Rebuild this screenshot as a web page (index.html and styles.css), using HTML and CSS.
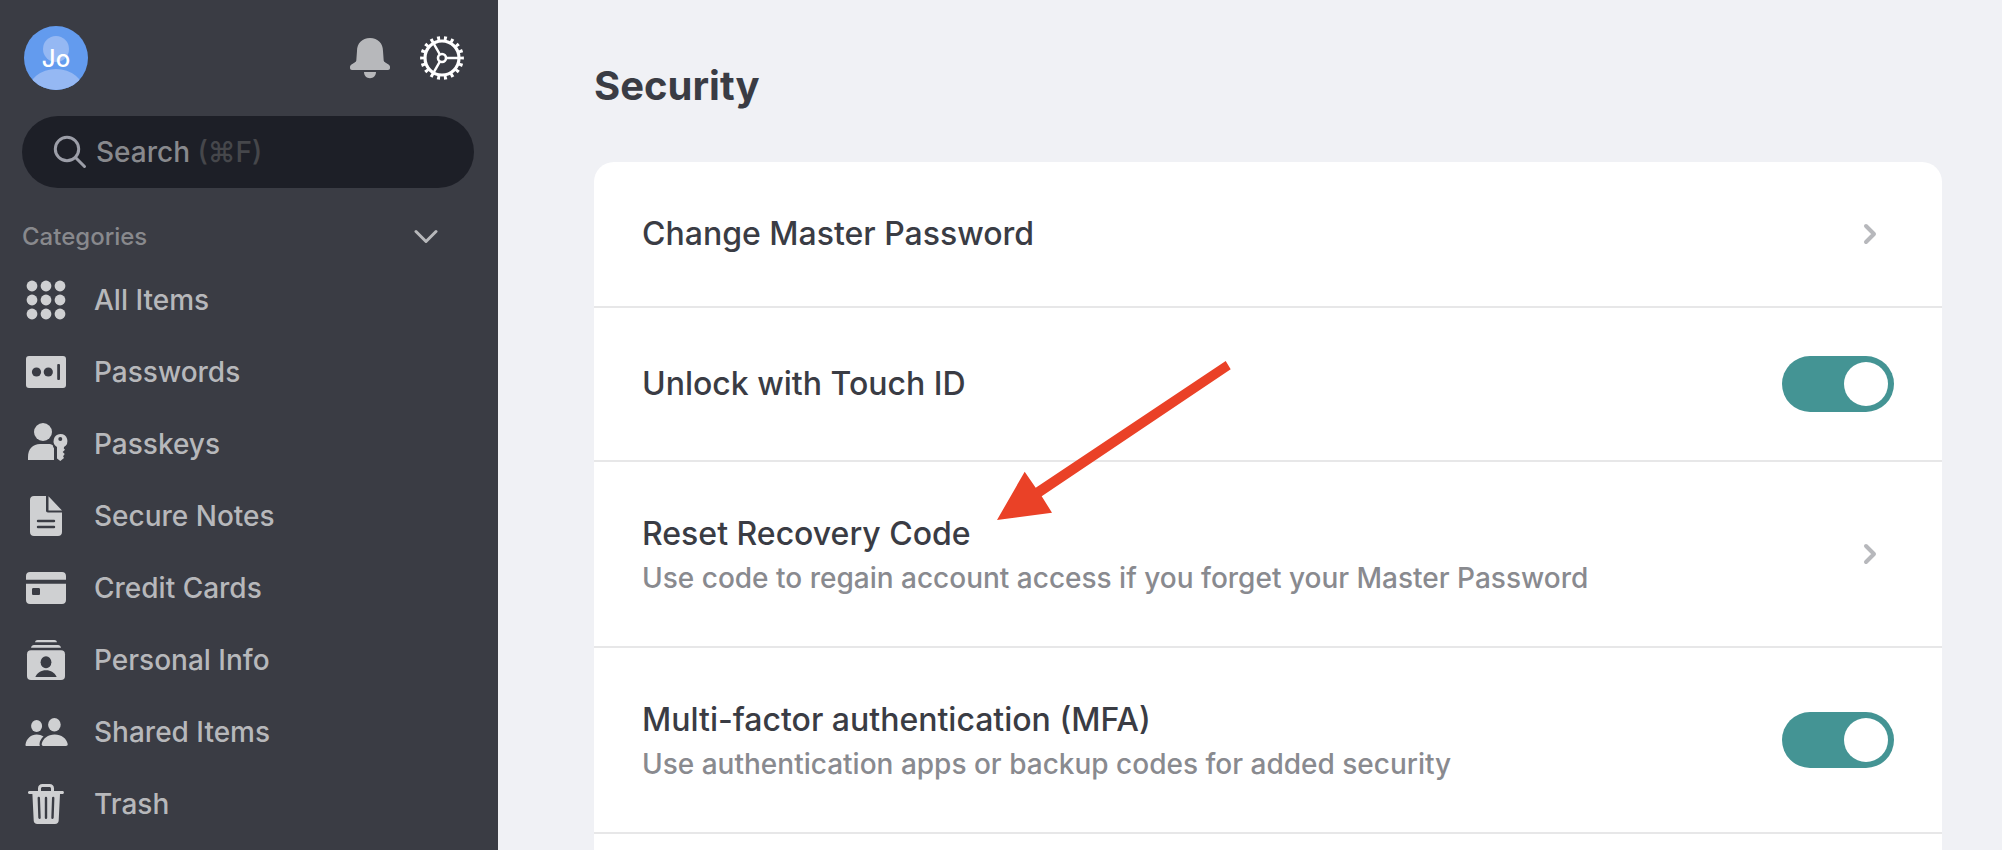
FILE: index.html
```html
<!DOCTYPE html>
<html lang="en">
<head>
<meta charset="utf-8">
<title>Security</title>
<meta name="viewport" content="width=device-width, initial-scale=1">
<link rel="stylesheet" href="styles.css">
</head>
<body class="app">
<aside class="sidebar">
  <header class="topbar">
    <button class="avatar" type="button" aria-label="Account">
      <svg class="avatar-art" viewBox="0 0 64 64" aria-hidden="true"><circle cx="32" cy="23" r="13"/><ellipse cx="32" cy="66" rx="28" ry="23"/></svg>
      <span class="avatar-name">Jo</span>
    </button>
    <div class="tools">
      <button class="tool" type="button" aria-label="Notifications">
        <svg class="icon" viewBox="0 0 48 48" aria-hidden="true"><path d="M24 4c-8 0-13 5.500-13 13l-.7 9.500c-.2 1-.8 1.500-1.600 2L5.500 30.500C4.500 31.200 4 32 4 33v1c0 1.300.8 2 2 2h36c1.200 0 2-.7 2-2v-1c0-1-.5-1.800-1.500-2.500l-3.200-2c-.8-.5-1.400-1-1.600-2L37 17C37 9.500 32 4 24 4zM18 38h12c0 3.600-2.500 6.200-6 6.200s-6-2.600-6-6.200z"/></svg>
      </button>
      <button class="tool tool-active" type="button" aria-label="Settings">
        <svg class="icon" viewBox="0 0 48 48" aria-hidden="true" fill="none" stroke="currentColor"><circle cx="24" cy="24" r="17" stroke-width="3.200"/><circle cx="24" cy="24" r="19.900" stroke-width="4" pathLength="36" stroke-dasharray=".85 1.150" stroke-dashoffset=".425"/><circle cx="24" cy="24" r="4" stroke-width="2.600"/><path stroke-width="2.400" d="M28.500 24H40M21.700 20.100 16 10.200M21.700 27.900 16 37.800"/></svg>
      </button>
    </div>
  </header>

  <div class="search">
    <svg class="search-icon" viewBox="0 0 36 36" aria-hidden="true"><circle cx="15" cy="15" r="11.700"/><path d="M23.500 23.500 32.500 32.500"/></svg>
    <label class="search-label" for="search">Search <span class="search-key">(⌘F)</span></label>
    <input class="search-input" id="search" type="text">
  </div>

  <button class="group" type="button" aria-expanded="true">
    <span>Categories</span>
    <svg class="group-arrow" viewBox="0 0 24 24" aria-hidden="true"><path d="M2 7.500 12 17.500 22 7.500"/></svg>
  </button>

  <nav class="nav" aria-label="Categories">
    <a class="nav-item" href="#all"><svg class="icon" viewBox="0 0 48 48" aria-hidden="true"><circle cx="10" cy="10" r="5.400"/><circle cx="24" cy="10" r="5.400"/><circle cx="38" cy="10" r="5.400"/><circle cx="10" cy="24" r="5.400"/><circle cx="24" cy="24" r="5.400"/><circle cx="38" cy="24" r="5.400"/><circle cx="10" cy="38" r="5.400"/><circle cx="24" cy="38" r="5.400"/><circle cx="38" cy="38" r="5.400"/></svg><span class="nav-text">All Items</span></a>
    <a class="nav-item" href="#passwords"><svg class="icon" viewBox="0 0 48 48" aria-hidden="true"><rect x="4" y="8" width="40" height="32" rx="3"/><g class="cut"><circle cx="14.500" cy="24" r="4.600"/><circle cx="26.300" cy="24" r="4.600"/><rect x="35.200" y="16" width="2.800" height="16" rx="1"/></g></svg><span class="nav-text">Passwords</span></a>
    <a class="nav-item" href="#passkeys"><svg class="icon" viewBox="0 0 48 48" aria-hidden="true"><circle cx="21" cy="12" r="9"/><path d="M6 40v-3c0-8 5-13 12-13h8c2.200 0 3.800.4 4.800 1.200.4 1.800.8 2.400 1.200 3V40z"/><path fill-rule="evenodd" d="M38.300 14a7 7 0 0 1 3.700 13l-.2 1.500 1.200 1.200-2.300 2.300 2 2-1.600 2.300.9 1.700L38.300 41 35 38.500V27a7 7 0 0 1 3.300-13zm0 3a2 2 0 1 0 0 4 2 2 0 0 0 0-4z"/></svg><span class="nav-text">Passkeys</span></a>
    <a class="nav-item" href="#notes"><svg class="icon" viewBox="0 0 48 48" aria-hidden="true"><path d="M12 4h12v14.500c0 1.300.7 2 2 2h14V40c0 2.500-1.500 4-4 4H12c-2.500 0-4-1.500-4-4V8c0-2.500 1.500-4 4-4zM26.500 4.200 40 18.500H26.500z"/><path class="cut-line" d="M16 29h16M16 35h16"/></svg><span class="nav-text">Secure Notes</span></a>
    <a class="nav-item" href="#cards"><svg class="icon" viewBox="0 0 48 48" aria-hidden="true"><path fill-rule="evenodd" d="M4 15.700V12c0-2.500 1.500-4 4-4h32c2.500 0 4 1.500 4 4v3.700zM4 19.800h40V36c0 2.500-1.500 4-4 4H8c-2.500 0-4-1.500-4-4zM11.500 24c-1 0-1.500.5-1.500 1.500v4c0 1 .5 1.500 1.500 1.500h5c1 0 1.500-.5 1.500-1.500v-4c0-1-.5-1.500-1.500-1.500z"/></svg><span class="nav-text">Credit Cards</span></a>
    <a class="nav-item" href="#personal"><svg class="icon" viewBox="0 0 48 48" aria-hidden="true"><path d="M13 6.300c.4-1.500 1.200-2.300 2.600-2.300h16.800c1.400 0 2.200.8 2.600 2.300zM9 11.800c.4-1.800 1.400-2.800 3-2.800h24c1.600 0 2.600 1 3 2.800z"/><rect x="5" y="14.300" width="38" height="29.700" rx="4"/><g class="cut"><ellipse cx="24" cy="26.200" rx="5.400" ry="6"/><path d="M13.300 41c2-4.300 5.800-6.700 10.700-6.700S32.700 36.700 34.700 41z"/></g></svg><span class="nav-text">Personal Info</span></a>
    <a class="nav-item" href="#shared"><svg class="icon" viewBox="0 0 48 48" aria-hidden="true"><ellipse cx="14.600" cy="18" rx="5.500" ry="6"/><ellipse cx="32.400" cy="16.700" rx="6.300" ry="6.700"/><path d="M4.800 38c-1 0-1.500-.6-1.300-1.600C4.500 30.500 9 26.500 14.700 26.500c2.600 0 5 .7 6.800 2-2.200 2-3.800 4.500-4 7.500 0 .8.100 1.400.4 2zM21.500 38c-1.200 0-2-.8-1.800-2 1-5.800 6.300-9.600 13-9.600s12 3.800 13 9.600c.2 1.200-.6 2-1.800 2z"/></svg><span class="nav-text">Shared Items</span></a>
    <a class="nav-item" href="#trash"><svg class="icon" viewBox="0 0 48 48" aria-hidden="true"><path fill-rule="evenodd" d="M16 11V8.500C16 5.700 17.700 4 20.500 4h7C30.300 4 32 5.700 32 8.500V11h8.500c.9 0 1.400.6 1.400 1.500s-.5 1.500-1.400 1.500H38l-1.300 26.500c-.1 2.300-1.400 3.500-3.700 3.500H15.400c-2.300 0-3.600-1.200-3.700-3.500L10.400 14H7.500C6.600 14 6 13.400 6 12.500S6.600 11 7.500 11zm3 0h10V8.700c0-1.100-.6-1.700-1.700-1.700h-6.600C19.600 7 19 7.600 19 8.700z"/><path class="cut-line" d="M16.800 18l.7 19.700M24 18v19.700M31.200 18l-.7 19.700"/></svg><span class="nav-text">Trash</span></a>
  </nav>
</aside>

<main class="main">
  <h1 class="title">Security</h1>
  <section class="card" aria-label="Security settings">
    <button class="row" type="button">
      <span class="row-text"><span class="row-title">Change Master Password</span></span>
      <svg class="chevron" viewBox="0 0 48 48" aria-hidden="true"><path d="M20 16l8 8-8 8"/></svg>
    </button>
    <div class="row">
      <label class="row-text" for="touch-id"><span class="row-title">Unlock with Touch ID</span></label>
      <input class="switch" id="touch-id" type="checkbox" role="switch" checked>
    </div>
    <button class="row" type="button">
      <span class="row-text">
        <span class="row-title">Reset Recovery Code</span>
        <span class="row-note">Use code to regain account access if you forget your Master Password</span>
      </span>
      <svg class="chevron" viewBox="0 0 48 48" aria-hidden="true"><path d="M20 16l8 8-8 8"/></svg>
      <svg class="pointer" viewBox="0 0 234 160" aria-hidden="true"><path d="M0 159 27.700 110.700 38.700 126.700 228.700 0 233.700 8.300 44.700 135.300 55 151.700z"/></svg>
    </button>
    <div class="row">
      <label class="row-text" for="mfa">
        <span class="row-title">Multi-factor authentication (MFA)</span>
        <span class="row-note">Use authentication apps or backup codes for added security</span>
      </label>
      <input class="switch" id="mfa" type="checkbox" role="switch" checked>
    </div>
  </section>
</main>
</body>
</html>
```

FILE: styles.css
```css
* { box-sizing: border-box; }

.app {
  display: flex;
  height: 100vh;
  margin: 0;
  overflow: hidden;
  background: #f0f1f5;
  color: #3a3c44;
  font-family: Inter, "Liberation Sans", sans-serif;
  font-size: 28px;
  font-weight: 450;
}

button {
  margin: 0;
  padding: 0;
  border: 0;
  background: none;
  color: inherit;
  font: inherit;
  text-align: left;
  cursor: pointer;
}

.sidebar {
  flex: none;
  width: 498px;
  padding: 26px 24px 0 22px;
  background: #3a3c44;
  color: #b7b8bb;
}

.topbar {
  display: flex;
  align-items: center;
  justify-content: space-between;
  padding: 0 8px 0 2px;
}

.avatar {
  display: grid;
  place-items: center;
  width: 64px;
  height: 64px;
  border-radius: 50%;
  overflow: hidden;
  background: #639bee;
  color: #fff;
  font-size: 24px;
}

.avatar-art,
.avatar-name { grid-area: 1 / 1; }

.avatar-art {
  width: 64px;
  height: 64px;
  fill: #95b8f3;
}

.tools {
  display: flex;
  gap: 24px;
}

.tool { color: #b7b8bb; }
.tool-active { color: #fff; }

.icon {
  display: block;
  flex: none;
  width: 48px;
  height: 48px;
}

.icon:not([fill]) { fill: currentColor; }

.search {
  display: flex;
  align-items: center;
  gap: 8px;
  height: 72px;
  margin-top: 26px;
  padding: 0 30px;
  border-radius: 36px;
  background: #1d1f27;
}

.search-icon {
  flex: none;
  width: 36px;
  height: 36px;
  fill: none;
  stroke: #9c9ea8;
  stroke-width: 3;
  stroke-linecap: round;
}

.search-label {
  color: #88898d;
  white-space: nowrap;
}

.search-key { color: #46474b; }

.search-input {
  flex: 1;
  min-width: 0;
  border: 0;
  outline: 0;
  background: none;
  color: #fff;
  font: inherit;
}

.group {
  display: flex;
  align-items: center;
  justify-content: space-between;
  width: 100%;
  height: 56px;
  margin-top: 20px;
  padding-right: 36px;
  color: #88898d;
  font-size: 24px;
}

.group-arrow {
  width: 24px;
  height: 24px;
  fill: none;
  stroke: #b7b8bb;
  stroke-width: 3;
  stroke-linecap: round;
  stroke-linejoin: round;
}

.nav-item {
  display: flex;
  align-items: center;
  gap: 24px;
  height: 72px;
  color: #cfd0d2;
  text-decoration: none;
}

.nav-text { color: #b7b8bb; }
.cut { fill: #3a3c44; }

.cut-line {
  fill: none;
  stroke: #3a3c44;
  stroke-width: 2.4;
  stroke-linecap: round;
}

.main {
  display: flex;
  flex: 1;
  flex-direction: column;
  min-width: 0;
  padding: 62px 60px 0 96px;
}

.title {
  margin: 0 0 52px;
  font-size: 40px;
  font-weight: 700;
  line-height: 48px;
}

.card {
  flex: 1 0 auto;
  border-radius: 20px 20px 0 0;
  background: #fff;
}

.row {
  position: relative;
  display: flex;
  align-items: center;
  justify-content: space-between;
  width: 100%;
  padding: 48px;
  border-bottom: 2px solid #e7e7e8;
}

.row-text {
  display: flex;
  flex-direction: column;
}

.row-title {
  font-size: 32px;
  line-height: 48px;
}

.row-note {
  color: #898a8f;
  line-height: 40px;
}

.chevron {
  flex: none;
  width: 48px;
  height: 48px;
  fill: none;
  stroke: #b7b8bc;
  stroke-width: 4;
  stroke-linecap: round;
  stroke-linejoin: round;
}

.switch {
  display: flex;
  flex: none;
  justify-content: flex-start;
  width: 112px;
  height: 56px;
  margin: 0;
  padding: 6px;
  border-radius: 28px;
  appearance: none;
  background: #b7b8bc;
  cursor: pointer;
}

.switch::before {
  content: "";
  width: 44px;
  height: 44px;
  border-radius: 50%;
  background: #fff;
}

.switch:checked {
  justify-content: flex-end;
  background: #449494;
}

.pointer {
  position: absolute;
  z-index: 1;
  top: -101px;
  left: 403px;
  width: 234px;
  height: 160px;
  fill: #ea4127;
  pointer-events: none;
}
```
